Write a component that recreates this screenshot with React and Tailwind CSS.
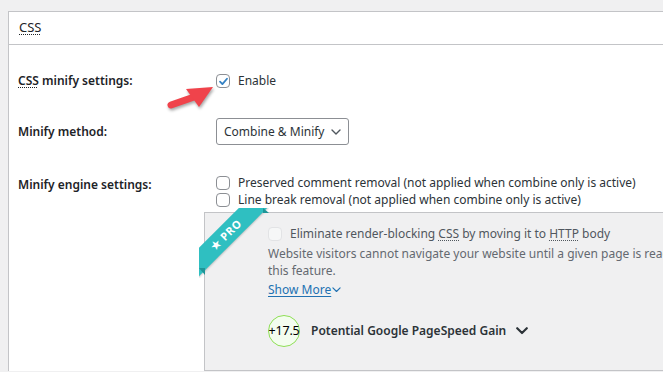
import React from 'react';

const font = { fontFamily: '"Noto Sans", "Open Sans", sans-serif' };

function Abbr({ children }) {
  return <span className="underline decoration-dotted decoration-1 underline-offset-2">{children}</span>;
}

function Checkbox({ checked, disabled }) {
  return (
    <span
      className={
        'inline-flex h-[14px] w-[14px] shrink-0 items-center justify-center rounded-[4px] border ' +
        (disabled ? 'border-[#e2e3e5] bg-[#f6f7f7]' : 'border-[#8c8f94] bg-white')
      }
    >
      {checked && (
        <svg width="11" height="11" viewBox="0 0 12 12" fill="none">
          <path d="M2.2 6.2l2.6 2.6L9.8 3" stroke="#3582c4" strokeWidth="2" strokeLinecap="round" strokeLinejoin="round" />
        </svg>
      )}
    </span>
  );
}

function Chevron({ className, stroke = '#50575e', w = 10, sw = 1.4 }) {
  return (
    <svg className={className} width={w} height={w * 0.6} viewBox="0 0 10 6" fill="none">
      <path d="M1 1l4 4 4-4" stroke={stroke} strokeWidth={sw} strokeLinecap="round" strokeLinejoin="round" />
    </svg>
  );
}

export default function App() {
  return (
    <div className="relative h-[372px] w-[663px] overflow-hidden bg-[#f0f0f1] pl-[8px] pt-[11px] text-[12px] text-[#2c3338]" style={font}>
      <div className="w-[700px] border-l border-t border-[#c3c4c7] bg-white">
        {/* header */}
        <div className="flex h-[33px] items-center border-b border-[#c3c4c7] pl-[10px] text-[13px] text-[#1d2327]">
          <Abbr>CSS</Abbr>
        </div>

        <div className="pt-[26px]">
          {/* CSS minify settings */}
          <div className="flex h-[20px] items-center">
            <div className="w-[207px] pl-[9px] font-semibold text-[#1d2327]">
              <Abbr>CSS</Abbr> minify settings:
            </div>
            <label className="flex items-center gap-[8px]">
              <Checkbox checked />
              <span>Enable</span>
            </label>
          </div>

          {/* Minify method */}
          <div className="mt-[27px] flex items-center">
            <div className="w-[207px] pl-[9px] font-semibold text-[#1d2327]">Minify method:</div>
            <div className="flex h-[27px] w-[133px] items-center justify-between whitespace-nowrap rounded-[3px] border border-[#8c8f94] bg-white pl-[7px] pr-[7px]">
              <span>Combine &amp; Minify</span>
              <Chevron />
            </div>
          </div>

          {/* Minify engine settings */}
          <div className="mt-[29px] flex items-start">
            <div className="w-[207px] pl-[9px] pt-[2px] font-semibold leading-[17px] text-[#1d2327]">Minify engine settings:</div>
            <div className="flex-1">
              <label className="flex h-[17px] items-center gap-[8px] whitespace-nowrap">
                <Checkbox />
                <span>Preserved comment removal (not applied when combine only is active)</span>
              </label>
              <label className="flex h-[17px] items-center gap-[8px] whitespace-nowrap">
                <Checkbox />
                <span>Line break removal (not applied when combine only is active)</span>
              </label>

              {/* pro box */}
              <div className="relative -ml-[12px] mt-[4px] h-[159px] w-[480px] border border-[#c3c4c7] bg-[#f0f0f1] pl-[63px] pt-[13px] text-[#646970]">
                <div className="pointer-events-none absolute -left-[6px] -top-[5px] h-[70px] w-[70px] overflow-hidden">
                  <div className="absolute left-[-23px] top-[17px] flex h-[20px] w-[100px] -rotate-45 items-center justify-center bg-[#2fbfc1] text-[11px] font-bold tracking-[0.6px] text-white shadow-[0_1px_2px_rgba(0,0,0,0.2)]">
                    ★ PRO
                  </div>
                </div>
                <div className="absolute -left-[6px] top-[55px] h-[7px] w-[6px] bg-[#1f9597] [clip-path:polygon(0_0,100%_0,100%_100%)]" />
                <div className="absolute left-[58px] -top-[5px] h-[5px] w-[6px] bg-[#1f9597] [clip-path:polygon(0_0,0_100%,100%_100%)]" />

                <div className="flex h-[15px] items-center gap-[8px] whitespace-nowrap">
                  <Checkbox disabled />
                  <span className="text-[#50575e]">
                    Eliminate render-blocking <Abbr>CSS</Abbr> by moving it to <Abbr>HTTP</Abbr> body
                  </span>
                </div>
                <div className="mt-[4px] whitespace-nowrap leading-[17px]">
                  Website visitors cannot navigate your website until a given page is ready - reduce the delay with
                  <br />
                  this feature.
                </div>
                <div className="mt-[2px] leading-[18px]">
                  <span className="inline-flex items-center text-[#2271b1] underline underline-offset-2">
                    Show More
                    <Chevron stroke="#2271b1" w={9} sw={1.3} className="ml-[1px]" />
                  </span>
                </div>
                <div className="mt-[16px] flex items-center">
                  <div className="flex h-[32px] w-[32px] items-center justify-center rounded-full border border-[#8ede55] bg-[#f3fdef] text-[12.5px] tracking-[-0.2px] text-black">
                    +17.5
                  </div>
                  <span className="ml-[11px] text-[12px] font-semibold text-[#2c3338]">Potential Google PageSpeed Gain</span>
                  <Chevron stroke="#2c3338" w={12} sw={1.8} className="ml-[10px]" />
                </div>
              </div>
            </div>
          </div>
        </div>
      </div>

      {/* red pointer arrow */}
      <svg className="absolute left-[160px] top-[75px]" width="60" height="40" viewBox="160 75 60 40" style={{ filter: 'drop-shadow(1px 2px 1.5px rgba(0,0,0,0.35))' }}>
        <line x1="171" y1="105" x2="194" y2="97" stroke="#f0434b" strokeWidth="7" strokeLinecap="round" />
        <polygon points="213,87 186,89 199,107" fill="#f0434b" />
      </svg>
    </div>
  );
}
